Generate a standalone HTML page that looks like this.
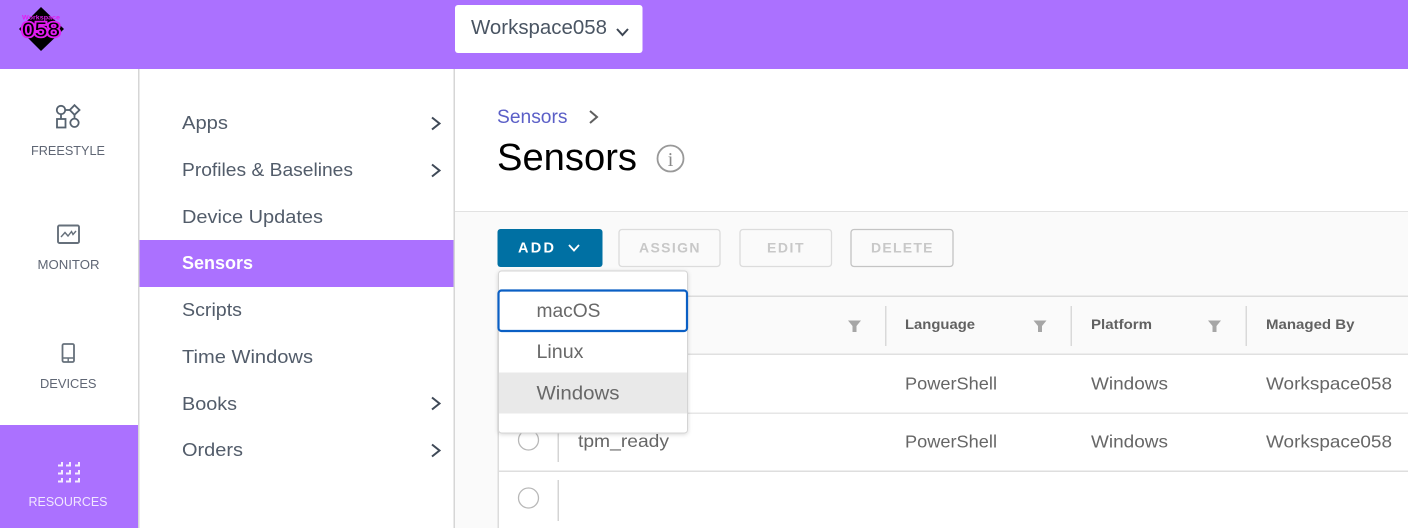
<!DOCTYPE html>
<html lang="en">
<head>
<meta charset="utf-8">
<title>Sensors</title>
<style>
html,body{margin:0;padding:0;width:1408px;height:528px;overflow:hidden;background:#fff}
svg{display:block}
text{font-family:"Liberation Sans",sans-serif}
.nav{font-size:18.5px;fill:#525c6a}
.cell{font-size:17.5px;fill:#666}
.th{font-size:14px;font-weight:bold;fill:#616161}
.side{font-size:12.5px;fill:#5f6674}
.btn{font-size:14px;font-weight:bold;fill:#c8c8c8}
.menu{font-size:19px;fill:#686868}
</style>
</head>
<body>
<svg width="1408" height="528" viewBox="0 0 1408 528" xmlns="http://www.w3.org/2000/svg">
<rect width="1408" height="528" fill="#fff"/>
<!-- content toolbar + table -->
<rect x="455" y="212" width="953" height="316" fill="#fafafa"/>
<rect x="455" y="211" width="953" height="1" fill="#e2e2e2"/>
<rect x="498" y="296" width="910" height="58" fill="#fafafa"/>
<rect x="499" y="355" width="909" height="173" fill="#fff"/>
<rect x="498" y="295.500" width="910" height="1.500" fill="#dcdcdc"/>
<rect x="498" y="353.500" width="910" height="1.500" fill="#e0e0e0"/>
<rect x="498" y="412.500" width="910" height="1.500" fill="#e6e6e6"/>
<rect x="498" y="470.500" width="910" height="1.500" fill="#dedede"/>
<rect x="497.500" y="296" width="1.500" height="232" fill="#dcdcdc"/>

<!-- sidebar borders -->
<rect x="138" y="69" width="1.500" height="459" fill="#d6d6d6"/>
<rect x="453.500" y="69" width="1.500" height="459" fill="#d6d6d6"/>

<!-- header -->
<rect width="1408" height="69" fill="#ab71ff"/>
<polygon points="41,7 64,29 41,51 19,29" fill="#000"/>
<text x="22" y="19.500" font-size="6.500" font-weight="bold" fill="#e21cf0" textLength="38" lengthAdjust="spacingAndGlyphs">Workspace</text>
<text x="22" y="36.500" font-size="20" fill="#000" stroke="#e21cf0" stroke-width="3.600" paint-order="stroke" textLength="38" lengthAdjust="spacingAndGlyphs">058</text>
<rect x="455" y="5" width="187.500" height="48" rx="3" fill="#fff"/>
<text x="471" y="34" font-size="20" fill="#4a5563" textLength="136" lengthAdjust="spacingAndGlyphs">Workspace058</text>
<path d="M617 29 L622.500 35 L628 29" fill="none" stroke="#3d4653" stroke-width="2"/>

<!-- left rail -->
<g fill="none" stroke="#56626f" stroke-width="1.800">
<circle cx="61" cy="110" r="4.200"/>
<path d="M65.200 110H70.500"/>
<path d="M74.500 105.200L79.500 110L74.500 114.800L69.800 110Z"/>
<path d="M61 114.500V118.500"/>
<rect x="57" y="119" width="8.500" height="8.500"/>
<path d="M74.500 115V118.500"/>
<circle cx="74.500" cy="122.800" r="4.200"/>
</g>
<text class="side" x="31" y="155" textLength="74" lengthAdjust="spacingAndGlyphs">FREESTYLE</text>
<g fill="none" stroke="#66707b" stroke-width="1.900">
<rect x="58" y="225.500" width="21" height="17.500" rx="1.500"/>
<path d="M61 237L65 232.500L68 236L71.500 231.500L73 234.500L76 231" stroke-width="1.400"/>
</g>
<text class="side" x="37.500" y="269" textLength="62" lengthAdjust="spacingAndGlyphs">MONITOR</text>
<g fill="none" stroke="#66707b" stroke-width="1.800">
<rect x="62.500" y="344" width="11.500" height="18" rx="1.500"/>
<path d="M62.500 358H74M68.200 358V362" stroke-width="1.400"/>
</g>
<text class="side" x="40" y="388" textLength="56.500" lengthAdjust="spacingAndGlyphs">DEVICES</text>
<rect x="0" y="425" width="138" height="103" fill="#ab71ff"/>
<g fill="none" stroke="#f4ecff" stroke-width="2">
<path d="M62 462V465.500H58M70 462V465.500H66M79 462V465.500H75"/>
<path d="M62 470V473.500H58M70 470V473.500H66M79 470V473.500H75"/>
<path d="M62 478V481.500H58M70 478V481.500H66M79 478V481.500H75"/>
</g>
<text x="28.500" y="506" font-size="12.500" fill="#f1e6ff" textLength="79" lengthAdjust="spacingAndGlyphs">RESOURCES</text>

<!-- second nav -->
<rect x="139.500" y="240" width="314" height="47" fill="#ab71ff"/>
<text class="nav" x="182" y="129" textLength="46" lengthAdjust="spacingAndGlyphs">Apps</text>
<text class="nav" x="182" y="176" textLength="171" lengthAdjust="spacingAndGlyphs">Profiles &amp; Baselines</text>
<text class="nav" x="182" y="223" textLength="141" lengthAdjust="spacingAndGlyphs">Device Updates</text>
<text x="182" y="269" font-size="18.500" font-weight="bold" fill="#fff" textLength="71" lengthAdjust="spacingAndGlyphs">Sensors</text>
<text class="nav" x="182" y="316" textLength="60" lengthAdjust="spacingAndGlyphs">Scripts</text>
<text class="nav" x="182" y="363" textLength="131" lengthAdjust="spacingAndGlyphs">Time Windows</text>
<text class="nav" x="182" y="410" textLength="55" lengthAdjust="spacingAndGlyphs">Books</text>
<text class="nav" x="182" y="456" textLength="61" lengthAdjust="spacingAndGlyphs">Orders</text>
<g fill="none" stroke="#3f4957" stroke-width="2">
<path d="M432 117.500L439.500 123.500L432 129.500"/>
<path d="M432 164.500L439.500 170.500L432 176.500"/>
<path d="M432 397.500L439.500 403.500L432 409.500"/>
<path d="M432 444.500L439.500 450.500L432 456.500"/>
</g>

<!-- breadcrumb + title -->
<text x="497" y="123" font-size="19" fill="#5b5fc7" textLength="70.500" lengthAdjust="spacingAndGlyphs">Sensors</text>
<path d="M590 111L597 117L590 123" fill="none" stroke="#5f5f5f" stroke-width="2"/>
<text x="497" y="170" font-size="38" fill="#000" textLength="140" lengthAdjust="spacingAndGlyphs">Sensors</text>
<circle cx="670.500" cy="158.500" r="13" fill="none" stroke="#999" stroke-width="1.800"/>
<text x="670.500" y="166" font-size="20" fill="#8a8a8a" text-anchor="middle" style="font-family:'Liberation Serif',serif">i</text>

<!-- toolbar buttons -->
<rect x="497.500" y="229" width="105" height="38" rx="3" fill="#0070a3"/>
<text x="518" y="252.500" font-size="14.500" font-weight="bold" fill="#fff" textLength="36" lengthAdjust="spacing">ADD</text>
<path d="M569 245L574 250.500L579 245" fill="none" stroke="#fff" stroke-width="1.800"/>
<rect x="619" y="229.500" width="101" height="37" rx="3" fill="#fafafa" stroke="#dcdcdc" stroke-width="1.300"/>
<text class="btn" x="639" y="252.500" textLength="60.500" lengthAdjust="spacing">ASSIGN</text>
<rect x="740" y="229.500" width="91.500" height="37" rx="3" fill="#fafafa" stroke="#dcdcdc" stroke-width="1.300"/>
<text class="btn" x="767" y="252.500" textLength="36.500" lengthAdjust="spacing">EDIT</text>
<rect x="851" y="229.500" width="102" height="37" rx="3" fill="#fafafa" stroke="#c4c4c4" stroke-width="1.300"/>
<text class="btn" x="871" y="252.500" textLength="61.500" lengthAdjust="spacing">DELETE</text>

<!-- table header -->
<g fill="#a6a6a6">
<path d="M848 320.500H861L856.500 326V332H852.500V326Z"/>
<path d="M1033.500 320.500H1046.500L1042 326V332H1038V326Z"/>
<path d="M1208 320.500H1221L1216.500 326V332H1212.500V326Z"/>
</g>
<rect x="885" y="306" width="1.500" height="40" fill="#d9d9d9"/>
<rect x="1070.500" y="306" width="1.500" height="40" fill="#d9d9d9"/>
<rect x="1245.500" y="306" width="1.500" height="40" fill="#d9d9d9"/>
<text class="th" x="905" y="329" textLength="70" lengthAdjust="spacingAndGlyphs">Language</text>
<text class="th" x="1091" y="329" textLength="61" lengthAdjust="spacingAndGlyphs">Platform</text>
<text class="th" x="1266" y="329" textLength="88.500" lengthAdjust="spacingAndGlyphs">Managed By</text>

<!-- table rows -->
<text class="cell" x="905" y="389.500" textLength="92" lengthAdjust="spacingAndGlyphs">PowerShell</text>
<text class="cell" x="1091" y="389.500" textLength="77" lengthAdjust="spacingAndGlyphs">Windows</text>
<text class="cell" x="1266" y="389.500" textLength="126" lengthAdjust="spacingAndGlyphs">Workspace058</text>
<text class="cell" x="905" y="447.500" textLength="92" lengthAdjust="spacingAndGlyphs">PowerShell</text>
<text class="cell" x="1091" y="447.500" textLength="77" lengthAdjust="spacingAndGlyphs">Windows</text>
<text class="cell" x="1266" y="447.500" textLength="126" lengthAdjust="spacingAndGlyphs">Workspace058</text>
<text class="cell" x="578" y="447" textLength="91" lengthAdjust="spacingAndGlyphs">tpm_ready</text>
<circle cx="528.500" cy="440" r="10" fill="#fff" stroke="#b8b8b8" stroke-width="1.300"/>
<circle cx="528.500" cy="498" r="10" fill="#fff" stroke="#b8b8b8" stroke-width="1.300"/>
<rect x="557.500" y="421" width="1.500" height="41" fill="#d4d4d4"/>
<rect x="557.500" y="480" width="1.500" height="41" fill="#d4d4d4"/>

<!-- dropdown -->
<defs>
<filter id="sh" x="-10%" y="-10%" width="120%" height="120%">
<feDropShadow dx="0" dy="1" stdDeviation="2" flood-color="#000" flood-opacity=".16"/>
</filter>
</defs>
<rect x="498.500" y="271" width="189" height="162" rx="3" fill="#fff" stroke="#d4d4d4" filter="url(#sh)"/>
<rect x="499" y="372.500" width="188" height="41" fill="#e9e9e9"/>
<rect x="498.500" y="290.500" width="188.500" height="40.500" rx="3" fill="#fff" stroke="#0a5fc4" stroke-width="2.200"/>
<text class="menu" x="536.500" y="317" textLength="64" lengthAdjust="spacingAndGlyphs">macOS</text>
<text class="menu" x="536.500" y="358" textLength="47" lengthAdjust="spacingAndGlyphs">Linux</text>
<text class="menu" x="536.500" y="399.500" textLength="83" lengthAdjust="spacingAndGlyphs">Windows</text>
</svg>
</body>
</html>
